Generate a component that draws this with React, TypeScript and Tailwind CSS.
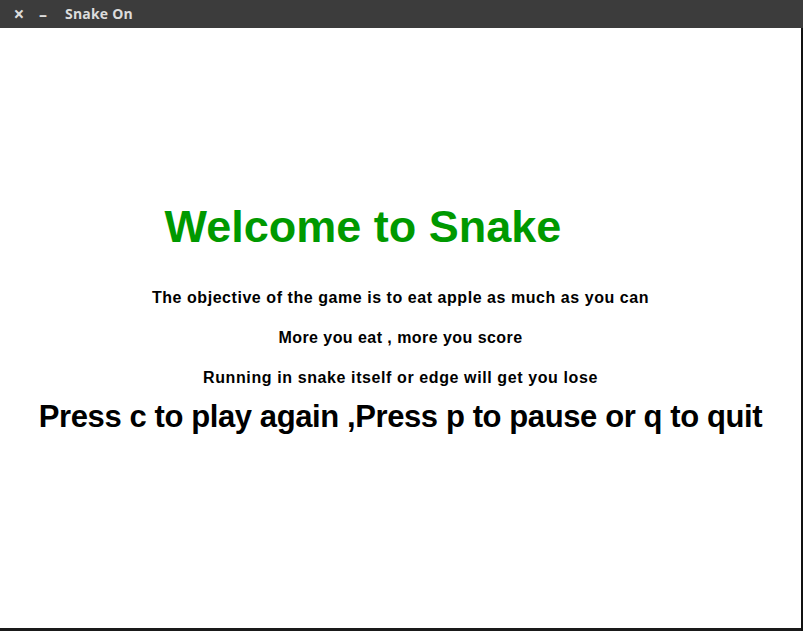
export default function App() {
  return (
    <div className="w-[803px] h-[631px] flex flex-col bg-[#1a1a1a] overflow-hidden">
      <div className="h-[28px] flex-none flex items-center bg-[#3c3c3c] text-[#dcdcdc] font-['Open_Sans',sans-serif] font-bold">
        <span className="ml-[12px] w-[14px] text-center text-[19px] leading-none">×</span>
        <span className="ml-[11px] w-[12px] text-center text-[16px] leading-none">–</span>
        <span className="ml-[16px] text-[14px] leading-none tracking-[0.2px]">Snake On</span>
      </div>
      <div className="flex-1 flex">
        <div className="flex-1 bg-white mb-[3px] font-['Liberation_Sans',Arial,sans-serif] font-bold text-center">
          <div className="mt-[179px] h-[40px] leading-[40px] text-[45px] text-[#009900] pr-[75px]">
            Welcome to Snake
          </div>
          <div className="mt-[31px] h-[40px] leading-[40px] text-[16px] text-black tracking-[0.55px]">
            The objective of the game is to eat apple as much as you can
          </div>
          <div className="h-[40px] leading-[40px] text-[16px] text-black tracking-[0.45px]">
            More you eat , more you score
          </div>
          <div className="h-[39px] leading-[40px] text-[16px] text-black tracking-[0.6px]">
            Running in snake itself or edge will get you lose
          </div>
          <div className="h-[40px] leading-[40px] text-[31px] text-black tracking-[-0.4px]">
            Press c to play again ,Press p to pause or q to quit
          </div>
        </div>
        <div className="w-[2px] bg-[#111]" />
      </div>
    </div>
  );
}
